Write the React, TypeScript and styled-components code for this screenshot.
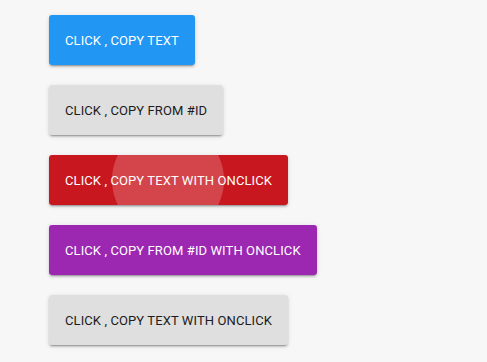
import React from "react";
import styled, { createGlobalStyle } from "styled-components";

const Global = createGlobalStyle`
  html, body { margin: 0; padding: 0; background: #f7f7f7; }
  body { font-family: Roboto, "Liberation Sans", sans-serif; }
`;

const Page = styled.div`
  display: flex;
  flex-direction: column;
  align-items: flex-start;
  gap: 20px;
  padding: 15px 0 0 49px;
  min-height: 362px;
  box-sizing: border-box;
  background: #f7f7f7;
`;

type Variant = "blue" | "gray" | "red" | "purple";

const palette: Record<Variant, { bg: string; fg: string }> = {
  blue: { bg: "#2196f3", fg: "#ffffff" },
  gray: { bg: "#dfdfdf", fg: "#1c1c1c" },
  red: { bg: "#c8171e", fg: "#ffffff" },
  purple: { bg: "#9c27b0", fg: "#ffffff" },
};

const Button = styled.button<{ $variant: Variant }>`
  position: relative;
  overflow: hidden;
  height: 50px;
  padding: 0 16px;
  border: none;
  border-radius: 3px;
  background: ${(p) => palette[p.$variant].bg};
  color: ${(p) => palette[p.$variant].fg};
  font-family: Roboto, "Liberation Sans", sans-serif;
  font-size: 13px;
  font-weight: 400;
  text-transform: uppercase;
  letter-spacing: 0.1px;
  box-shadow: 0 2px 2px 0 rgba(0, 0, 0, 0.14), 0 1px 5px 0 rgba(0, 0, 0, 0.12),
    0 3px 1px -2px rgba(0, 0, 0, 0.2);
  cursor: pointer;
`;

const Label = styled.span`
  position: relative;
  z-index: 1;
`;

const Ripple = styled.span`
  position: absolute;
  left: 63px;
  top: -31px;
  width: 112px;
  height: 112px;
  border-radius: 50%;
  background: rgba(255, 255, 255, 0.2);
`;

export default function App() {
  return (
    <>
      <Global />
      <Page>
        <Button $variant="blue">
          <Label>Click , copy text</Label>
        </Button>
        <Button $variant="gray">
          <Label>Click , copy from #id</Label>
        </Button>
        <Button $variant="red">
          <Ripple />
          <Label>Click , copy text with onclick</Label>
        </Button>
        <Button $variant="purple">
          <Label>Click , copy from #id with onclick</Label>
        </Button>
        <Button $variant="gray">
          <Label>Click , copy text with onclick</Label>
        </Button>
      </Page>
    </>
  );
}
